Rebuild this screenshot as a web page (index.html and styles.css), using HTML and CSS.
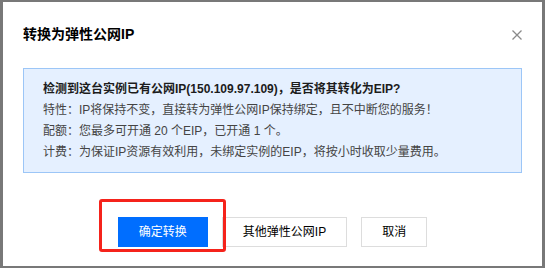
FILE: index.html
```html
<!DOCTYPE html>
<html lang="zh-CN">
<head>
  <meta charset="UTF-8">
  <title>转换为弹性公网IP</title>
  <link rel="stylesheet" href="styles.css">
</head>
<body>
<div class="dialog">
  <div class="dialog-head">
    <h3 class="dialog-title">转换为弹性公网IP</h3>
    <button type="button" class="dialog-close" title="关闭">
      <svg width="10" height="10" viewBox="0 0 10 10">
        <path d="M0.5 0.5 L9.5 9.5 M9.5 0.5 L0.5 9.5" stroke="#8a8a8a" stroke-width="1.3" fill="none"/>
      </svg>
    </button>
  </div>
  <div class="alert-info">
    <p class="alert-title">检测到这台实例已有公网IP(150.109.97.109)，是否将其转化为EIP?</p>
    <p>特性：IP将保持不变，直接转为弹性公网IP保持绑定，且不中断您的服务！</p>
    <p>配额：您最多可开通 20 个EIP，已开通 1 个。</p>
    <p>计费：为保证IP资源有效利用，未绑定实例的EIP，将按小时收取少量费用。</p>
  </div>
  <div class="dialog-foot">
    <span class="mark">
      <button type="button" class="btn btn-primary">确定转换</button>
    </span>
    <button type="button" class="btn">其他弹性公网IP</button>
    <button type="button" class="btn">取消</button>
  </div>
</div>
</body>
</html>
```

FILE: styles.css
```css
html, body {
  margin: 0;
  height: 268px;
}

body {
  background-color: #787878;
  padding: 2px 3px;
  box-sizing: border-box;
  font-family: "Liberation Sans", "Noto Sans CJK SC", sans-serif;
  font-size: 12px;
  color: #444;
}

.dialog {
  width: 539px;
  height: 264px;
  background-color: #fff;
  padding: 20px 20px 0;
  box-sizing: border-box;
}

.dialog-head {
  display: flex;
  justify-content: space-between;
  align-items: center;
  height: 24px;
}

.dialog-title {
  margin: 0;
  font-size: 14px;
  line-height: 24px;
  font-weight: bold;
  color: #000;
}

.dialog-close {
  display: flex;
  padding: 0;
  margin: 2px 0 0;
  border: none;
  background: none;
  cursor: pointer;
}

.alert-info {
  margin-top: 22px;
  padding: 10px 19px 9px;
  background-color: #e5f0ff;
  border: 1px solid #9cc6f7;
}

.alert-info p {
  margin: 0;
  line-height: 21px;
}

.alert-info .alert-title {
  font-weight: bold;
  color: #1c1c1c;
}

.dialog-foot {
  display: flex;
  justify-content: center;
  gap: 14px;
  margin-top: 44px;
}

.btn {
  height: 30px;
  padding: 0 20px;
  border: 1px solid #ddd;
  background-color: #fff;
  color: #000;
  font-family: inherit;
  font-size: 12px;
  line-height: 28px;
  cursor: pointer;
}

.btn-primary {
  min-width: 90px;
  background-color: #006eff;
  border-color: #006eff;
  color: #fff;
}

.mark {
  position: relative;
  display: flex;
}

.mark::after {
  content: "";
  position: absolute;
  left: -19px;
  top: -18px;
  width: 127px;
  height: 53px;
  border: 3px solid #f5231b;
  border-radius: 3px;
  box-sizing: border-box;
  pointer-events: none;
}
```
